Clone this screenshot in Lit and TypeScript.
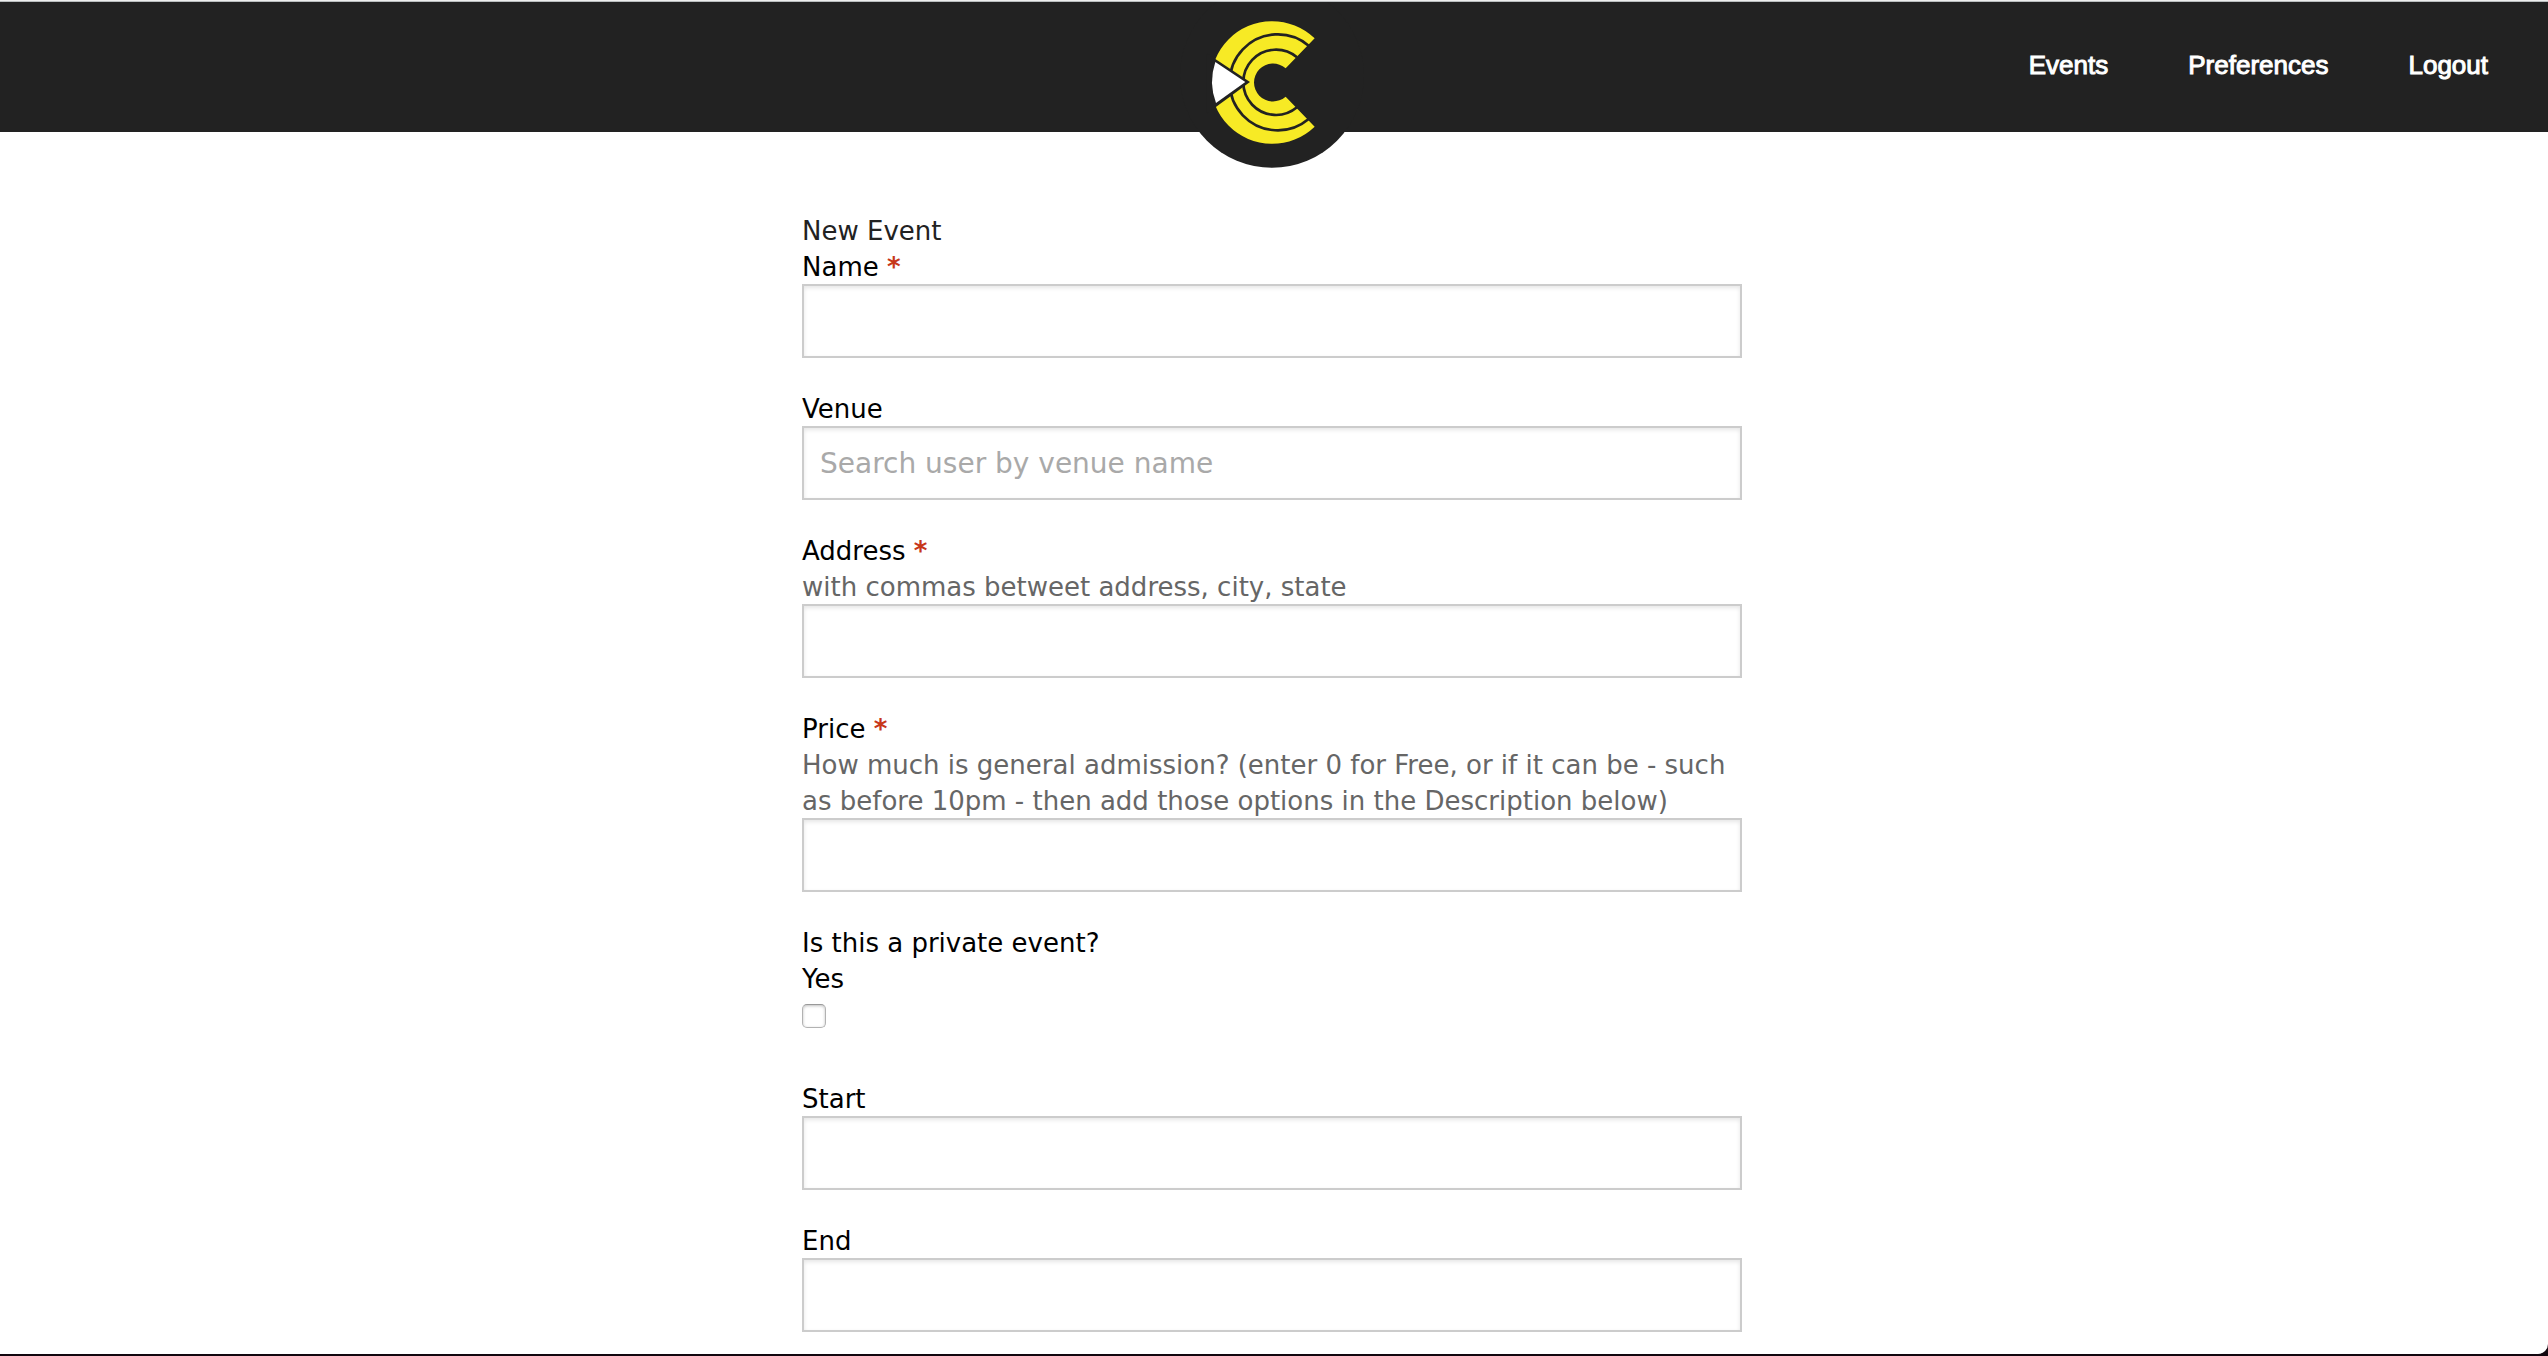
import { LitElement, html, css, svg, nothing } from "lit";
import { customElement } from "lit/decorators.js";

interface Field {
  id: string;
  label: string;
  required?: boolean;
  hint?: string;
  placeholder?: string;
}

const NAV = ["Events", "Preferences", "Logout"];

const DETAILS: Field[] = [
  { id: "name", label: "Name", required: true },
  { id: "venue", label: "Venue", placeholder: "Search user by venue name" },
  {
    id: "address",
    label: "Address",
    required: true,
    hint: "with commas betweet address, city, state",
  },
  {
    id: "price",
    label: "Price",
    required: true,
    hint: "How much is general admission? (enter 0 for Free, or if it can be - such as before 10pm - then add those options in the Description below)",
  },
];

const TIMES: Field[] = [
  { id: "start", label: "Start" },
  { id: "end", label: "End" },
];

@customElement("site-header")
class SiteHeader extends LitElement {
  static styles = css`
    :host {
      display: block;
    }
    .bar {
      position: relative;
      display: flex;
      justify-content: flex-end;
      height: 131px;
      border-top: 1px solid #eee;
      background: #222;
      box-shadow: inset 0 1px #b9bdbe;
    }
    .nav {
      display: flex;
      gap: 80px;
      padding: 46px 60px 0 0;
    }
    .link {
      font: 26px/36px "Liberation Sans", Arial, sans-serif;
      color: #fff;
      text-decoration: none;
      -webkit-text-stroke: 1px #fff;
    }
    .logo {
      position: absolute;
      top: 1px;
      left: 50%;
      margin-left: -96px;
      width: 188px;
      height: 166px;
    }
    .mark {
      display: block;
      width: 188px;
      height: 166px;
    }
    .dark {
      fill: #222;
    }
    .yellow {
      fill: #f7ea25;
    }
    .white {
      fill: #fff;
    }
    .groove {
      fill: none;
      stroke: #222;
      stroke-width: 8;
    }
  `;

  /* The mark is drawn on a grid of three units per pixel, centred on 0,0. */
  private mark() {
    return svg`
      <circle class="dark" cx="0" cy="-20" r="276"></circle>
      <path class="yellow" d="M128 -132 A184 184 0 1 0 128 133 L41 43 A57 57 0 1 1 41 -42 Z"></path>
      <path class="groove" d="M110 -110 A144 144 0 1 0 110 110"></path>
      <path class="groove" d="M75 -75 A98 98 0 1 0 75 75"></path>
      <path class="dark" d="M-66 -1 L-196 -87 V94 Z"></path>
      <path class="white" d="M-80 -1 L-170 -61 A182 182 0 0 0 -168 62 Z"></path>
    `;
  }

  render() {
    return html`
      <header class="bar">
        <a class="logo" href="#" aria-label="Home">
          <svg class="mark" viewBox="-282 -241 564 498" aria-hidden="true">${this.mark()}</svg>
        </a>
        <nav class="nav">
          ${NAV.map((item) => html`<a class="link" href="#">${item}</a>`)}
        </nav>
      </header>
    `;
  }
}

@customElement("app-root")
class AppRoot extends LitElement {
  static styles = css`
    :host {
      display: block;
      box-sizing: border-box;
      min-height: 100vh;
      background: #12060f;
      font: 26px/36px "DejaVu Sans", Verdana, sans-serif;
      color: #000;
    }
    .page {
      box-sizing: border-box;
      min-height: calc(100vh - 2px);
      border-bottom-right-radius: 10px;
      background: #fff;
    }
    .form {
      display: flex;
      flex-direction: column;
      gap: 33px;
      box-sizing: border-box;
      max-width: 944px;
      margin: 0 auto;
      padding: 81px 4px 22px 0;
    }
    .title {
      margin: 0 0 -33px;
      font: inherit;
      color: #222;
    }
    .field {
      display: flex;
      flex-direction: column;
      margin: 0;
      padding: 0;
      border: 0;
    }
    .legend {
      padding: 0;
    }
    .star {
      font-weight: bold;
      color: #c7371a;
    }
    .hint {
      color: #666;
    }
    .input {
      box-sizing: border-box;
      width: 100%;
      height: 74px;
      margin: -1px 0 0;
      padding: 0 16px;
      border: 2px solid #ccc;
      border-radius: 0;
      outline: none;
      background: #fff;
      box-shadow: inset 0 2px 4px rgba(0, 0, 0, 0.1);
      font: 28px "DejaVu Sans", Verdana, sans-serif;
      color: #000;
    }
    .input::placeholder {
      color: #a9a9a9;
      opacity: 1;
    }
    .check {
      appearance: none;
      box-sizing: border-box;
      width: 24px;
      height: 24px;
      margin: 7px 0 20px;
      border: 1px solid #b2b2b2;
      border-top-color: #999;
      border-radius: 5px;
      background: #fff;
      box-shadow: inset 0 1px 3px rgba(0, 0, 0, 0.25);
    }
    .check:checked {
      background: #666;
    }
  `;

  private field(f: Field) {
    return html`
      <div class="field">
        <label for=${f.id}
          >${f.label}${f.required ? html` <span class="star">*</span>` : nothing}</label
        >
        ${f.hint ? html`<span class="hint" id="${f.id}-hint">${f.hint}</span>` : nothing}
        <input
          class="input"
          type="text"
          id=${f.id}
          placeholder=${f.placeholder ?? nothing}
          ?required=${f.required ?? false}
          aria-describedby=${f.hint ? `${f.id}-hint` : nothing}
        />
      </div>
    `;
  }

  render() {
    return html`
      <div class="page">
        <site-header></site-header>
        <form class="form">
          <h1 class="title">New Event</h1>
          ${DETAILS.map((f) => this.field(f))}
          <fieldset class="field">
            <legend class="legend">Is this a private event?</legend>
            <label for="private">Yes</label>
            <input class="check" type="checkbox" id="private" />
          </fieldset>
          ${TIMES.map((f) => this.field(f))}
        </form>
      </div>
    `;
  }
}
